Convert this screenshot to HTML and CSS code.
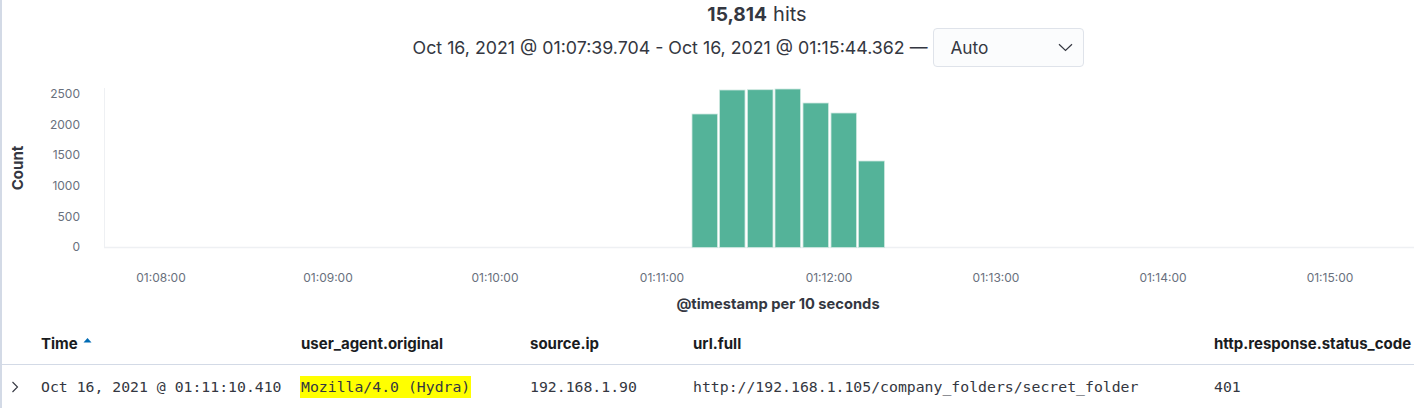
FILE: index.html
```html
<!DOCTYPE html>
<html>
<head>
<meta charset="utf-8">
<link rel="stylesheet" href="styles.css">
</head>
<body>
<div class="panel">
  <header class="summary">
    <div class="hits-line"><strong class="hits-count">15,814</strong> <span class="hits-word">hits</span></div>
    <div class="range-line">
      <span class="range-text">Oct 16, 2021 @ 01:07:39.704 - Oct 16, 2021 @ 01:15:44.362 —</span>
      <div class="interval-select">
        <span>Auto</span>
        <svg class="chev-down" width="15" height="9" viewBox="0 0 15 9"><path d="M1 1.2 L7.5 7.5 L14 1.2" fill="none" stroke="#343741" stroke-width="1.2"/></svg>
      </div>
    </div>
  </header>

  <svg class="chart" width="1412" height="250" viewBox="0 0 1412 250">
    <text class="axis-title" transform="translate(17 100) rotate(-90)" text-anchor="middle">Count</text>
    <g class="ytick" text-anchor="end">
      <text x="78" y="26.5">2500</text>
      <text x="78" y="57.5">2000</text>
      <text x="78" y="87.5">1500</text>
      <text x="78" y="118.5">1000</text>
      <text x="78" y="149.5">500</text>
      <text x="78" y="180">0</text>
    </g>
    <line x1="102.5" y1="20" x2="102.5" y2="180" stroke="#eef0f3" stroke-width="1"/>
    <line x1="102" y1="179.5" x2="1412" y2="179.5" stroke="#eef0f3" stroke-width="1.5"/>
    <g class="bars" fill="#54b399">
      <rect x="690" y="46" width="25.5" height="133.5"/>
      <rect x="717.5" y="22" width="25.5" height="157.5"/>
      <rect x="745.5" y="21.7" width="25.5" height="157.8"/>
      <rect x="773" y="21" width="25.5" height="158.5"/>
      <rect x="801" y="35" width="25.5" height="144.5"/>
      <rect x="829" y="45" width="25.5" height="134.5"/>
      <rect x="856.5" y="93" width="26" height="86.5"/>
    </g>
    <g class="xtick" text-anchor="middle">
      <text x="159" y="211">01:08:00</text>
      <text x="326" y="211">01:09:00</text>
      <text x="493" y="211">01:10:00</text>
      <text x="660" y="211">01:11:00</text>
      <text x="827" y="211">01:12:00</text>
      <text x="994" y="211">01:13:00</text>
      <text x="1161" y="211">01:14:00</text>
      <text x="1328" y="211">01:15:00</text>
    </g>
    <text class="axis-title x-title" x="776" y="237" text-anchor="middle">@timestamp per 10 seconds</text>
  </svg>

  <div class="doc-table">
    <div class="doc-row head-row">
      <div class="cell"></div>
      <div class="cell th">Time <svg class="sort-arrow" width="9" height="6" viewBox="0 0 9 6"><path d="M0.5 5.5 L4.5 1 L8.5 5.5 Z" fill="#006bb4"/></svg></div>
      <div class="cell th">user_agent.original</div>
      <div class="cell th">source.ip</div>
      <div class="cell th">url.full</div>
      <div class="cell th">http.response.status_code</div>
    </div>
    <div class="doc-row data-row">
      <div class="cell expand"><svg width="8" height="12" viewBox="0 0 8 12"><path d="M1.5 1 L6.5 6 L1.5 11" fill="none" stroke="#343741" stroke-width="1.1"/></svg></div>
      <div class="cell td">Oct 16, 2021 @ 01:11:10.410</div>
      <div class="cell td"><mark class="hl">Mozilla/4.0 (Hydra)</mark></div>
      <div class="cell td">192.168.1.90</div>
      <div class="cell td">http://192.168.1.105/company_folders/secret_folder</div>
      <div class="cell td">401</div>
    </div>
  </div>
</div>
</body>
</html>
```

FILE: styles.css
```css
html, body {
  margin: 0;
  padding: 0;
  background: #ffffff;
}

body {
  font-family: Inter, "Noto Sans", "Liberation Sans", sans-serif;
  color: #343741;
  width: 1414px;
  height: 408px;
  overflow: hidden;
}

.panel {
  border-left: 2px solid #d3dae6;
  height: 408px;
  box-sizing: border-box;
}

.summary {
  display: flex;
  flex-direction: column;
}

.hits-line {
  height: 27px;
  display: flex;
  align-items: center;
  justify-content: center;
  padding-left: 98px;
  color: #343741;
  white-space: pre;
}

.hits-count {
  font-size: 19.2px;
  font-weight: 700;
  margin-right: 6px;
}

.hits-word {
  font-size: 20px;
}

.range-line {
  height: 41px;
  display: flex;
  align-items: center;
  justify-content: center;
  padding-left: 81px;
  font-size: 17.8px;
}

.range-text {
  white-space: nowrap;
}

.interval-select {
  margin-left: 6px;
  width: 151px;
  height: 39px;
  box-sizing: border-box;
  border: 1px solid #dfe3ea;
  border-radius: 4px;
  background: #fbfcfd;
  display: flex;
  align-items: center;
  justify-content: space-between;
  padding: 0 10px 0 16px;
  font-size: 17.3px;
  color: #343741;
}

.chart {
  display: block;
}

.chart text {
  font-family: Inter, "Noto Sans", "Liberation Sans", sans-serif;
}

.axis-title {
  font-size: 15px;
  font-weight: 700;
  fill: #343741;
  dominant-baseline: middle;
}

.x-title {
  font-size: 14.7px;
}

.ytick text, .xtick text {
  font-size: 12px;
  fill: #69707d;
  dominant-baseline: middle;
}

.bars rect {
  stroke: #cfe8e0;
  stroke-width: 0.8;
}

.doc-table {
  display: flex;
  flex-direction: column;
  margin-top: 4px;
}

.doc-row {
  display: grid;
  grid-template-columns: 39px 260px 229px 163px 521px 1fr;
  align-items: center;
}

.head-row {
  height: 42px;
  border-bottom: 1px solid #d3dae6;
}

.data-row {
  height: 43px;
}

.th {
  font-size: 15px;
  font-weight: 700;
  color: #1a1c21;
  white-space: nowrap;
  display: flex;
  align-items: center;
}

.sort-arrow {
  margin-left: 5px;
  margin-top: -7px;
}

.td {
  font-family: "DejaVu Sans Mono", "Liberation Mono", monospace;
  font-size: 14.8px;
  color: #343741;
  white-space: nowrap;
}

.expand {
  padding-left: 9px;
  display: flex;
  align-items: center;
}

.hl {
  background: #ffff00;
  color: #343741;
  padding: 2px 1px 3px 1px;
  margin-left: -1px;
}
```
